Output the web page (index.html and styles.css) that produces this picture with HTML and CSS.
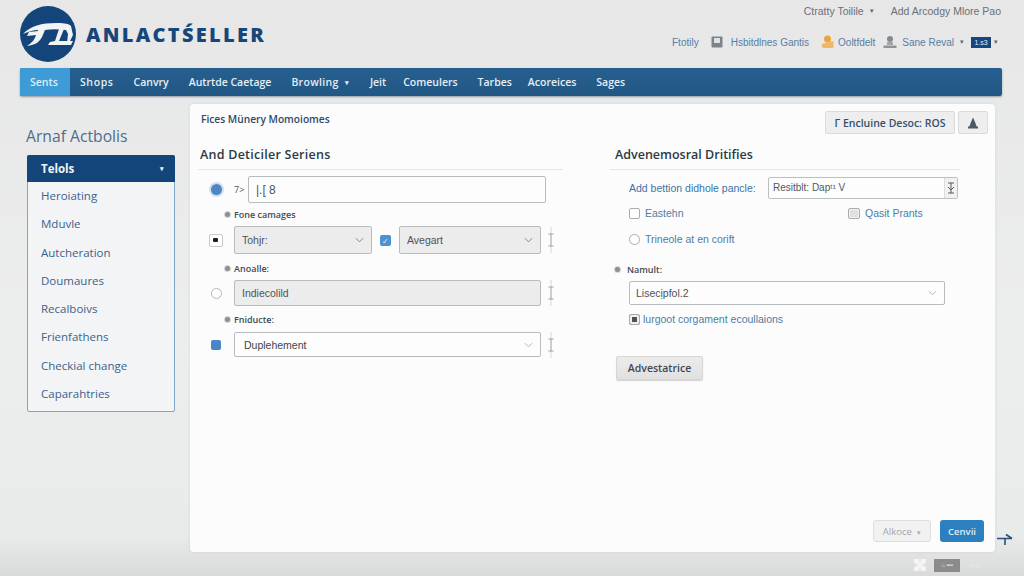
FILE: index.html
```html
<!DOCTYPE html>
<html lang="en">
<head>
<meta charset="utf-8">
<title>Anlactseller</title>
<link rel="stylesheet" href="styles.css">
</head>
<body>
<div class="page">
  <header class="header">
    <div class="brand">
      <svg class="logo" viewBox="0 0 56 56" aria-hidden="true">
        <circle cx="28" cy="28" r="28" fill="#14457a"/>
        <path d="M3 28 C10 20 22 17 36 17 C42 17 48 17 51 20 L53 29 L49 37 L47 37 L48 28 L46 24 C38 23 31 23 25 24 L22 31 C19 37 14 39 7 40 C12 37 15 33 16 29 L7 30 L9 26 L18 25 L18 24 C13 24 8 26 3 28 Z" fill="#f1f3f5"/>
        <path d="M39 23 L44 23 L39 35 L53 35 L51 39 L28 39 L30 36 L35 35 Z" fill="#f1f3f5"/>
      </svg>
      <span class="wordmark">ANLACTŚELLER</span>
    </div>
    <div class="utility">
      <div class="util-top">
        <span>Ctratty Toilile</span><span class="caret-small">▾</span>
        <span class="util-add">Add Arcodgy Mlore Pao</span>
      </div>
      <div class="util-bottom">
        <span>Ftotily</span>
        <svg class="uicon u1" viewBox="0 0 12 12"><rect x="0.5" y="0.5" width="11" height="11" rx="1" fill="#7d8388"/><rect x="3" y="2" width="6" height="5" fill="#dfe2e3"/></svg>
        <span>Hsbitdlnes Gantis</span>
        <svg class="uicon u2" viewBox="0 0 12 14"><circle cx="6" cy="4" r="3.5" fill="#eca33c"/><path d="M0 9 L12 6 L12 13 L1 13 Z" fill="#f0b765"/></svg>
        <span>Ooltfdelt</span>
        <svg class="uicon u3" viewBox="0 0 14 14"><circle cx="7" cy="4" r="3" fill="#868b8e"/><rect x="4" y="7" width="6" height="3" fill="#a2a6a8"/><rect x="0.5" y="10.5" width="13" height="2.5" fill="#8f9497"/></svg>
        <span>Sane Reval</span><span class="caret-small">▾</span>
        <span class="flag">1.s3</span><span class="caret-small caret-flag">▾</span>
      </div>
    </div>
  </header>

  <nav class="nav">
    <a class="nav-item nav-active">Sents</a>
    <a class="nav-item nav-shops">Shops</a>
    <a class="nav-item">Canvry</a>
    <a class="nav-item">Autrtde Caetage</a>
    <a class="nav-item nav-browling">Browling <span class="nav-caret">▾</span></a>
    <a class="nav-item nav-jeit">Jeit</a>
    <a class="nav-item">Comeulers</a>
    <a class="nav-item nav-tarbes">Tarbes</a>
    <a class="nav-item">Acoreices</a>
    <a class="nav-item">Sages</a>
  </nav>

  <div class="content">
    <aside class="sidebar">
      <h2 class="side-title">Arnaf Actbolis</h2>
      <div class="side-box">
        <div class="side-head"><span>Telols</span><span class="side-caret">▾</span></div>
        <ul class="side-list">
          <li>Heroiating</li>
          <li>Mduvle</li>
          <li>Autcheration</li>
          <li>Doumaures</li>
          <li>Recalboivs</li>
          <li>Frienfathens</li>
          <li>Checkial change</li>
          <li>Caparahtries</li>
        </ul>
      </div>
    </aside>

    <main class="panel">
      <div class="panel-top">
        <div class="panel-title">Fices Münery Momoiomes</div>
        <div class="panel-actions">
          <button class="btn-top">Г Encluine Desoc: ROS</button>
          <button class="btn-icon" aria-label="User">
            <svg viewBox="0 0 12 12" width="12" height="12"><path d="M6 0.5 L8 5 L10 10.5 L2 10.5 L4 5 Z" fill="#4d5a66"/><rect x="1" y="9.5" width="10" height="2" fill="#4d5a66"/></svg>
          </button>
        </div>
      </div>

      <div class="columns">
        <section class="col-left">
          <h3 class="section-head">And Deticiler Seriens</h3>

          <div class="row row-first">
            <span class="ctl"><span class="radio-on"></span></span>
            <span class="prefix">7&gt;</span>
            <div class="field field-grow field-white field-tall">|.[ 8</div>
          </div>

          <div class="sublabel sub-1"><span class="dot"></span>Fone camages</div>
          <div class="row row-selects">
            <span class="ctl"><span class="check-dot"></span></span>
            <div class="field field-gray sel-a">Tohjr:<svg class="chev" viewBox="0 0 10 6"><path d="M1 1 L5 5 L9 1" /></svg></div>
            <span class="check-blue">✓</span>
            <div class="field field-gray sel-b">Avegart<svg class="chev" viewBox="0 0 10 6"><path d="M1 1 L5 5 L9 1" /></svg></div>
            <svg class="ibeam" viewBox="0 0 8 28"><path class="ibeam-end" d="M4 1 V8 M4 20 V27" /><path d="M4 8 V20 M1.5 8 H6.5 M1.5 20 H6.5" /></svg>
          </div>

          <div class="sublabel sub-2"><span class="dot"></span>Anoalle:</div>
          <div class="row row-plain">
            <span class="ctl"><span class="radio-off"></span></span>
            <div class="field field-gray field-grow">Indiecolild</div>
            <svg class="ibeam" viewBox="0 0 8 28"><path class="ibeam-end" d="M4 1 V8 M4 20 V27" /><path d="M4 8 V20 M1.5 8 H6.5 M1.5 20 H6.5" /></svg>
          </div>

          <div class="sublabel sub-3"><span class="dot"></span>Fniducte:</div>
          <div class="row row-last">
            <span class="ctl"><span class="check-small"></span></span>
            <div class="field field-white field-grow field-dupe">Duplehement<svg class="chev chev-light" viewBox="0 0 10 6"><path d="M1 1 L5 5 L9 1" /></svg></div>
            <svg class="ibeam" viewBox="0 0 8 28"><path class="ibeam-end" d="M4 1 V8 M4 20 V27" /><path d="M4 8 V20 M1.5 8 H6.5 M1.5 20 H6.5" /></svg>
          </div>
        </section>

        <section class="col-right">
          <h3 class="section-head">Advenemosral Dritifies</h3>
          <div class="right-body">
            <div class="right-row">
              <span class="blue-label">Add bettion didhole pancle:</span>
              <div class="spin-input"><span class="spin-text">Resitblt: Dapᵗ¹ V</span><span class="spin-btn"><svg viewBox="0 0 8 12" width="8" height="12"><path d="M1 1 H7 M1 11 H7 M4 1 V11 M1 5 L4 8 L7 5" /></svg></span></div>
            </div>
            <div class="opt-row opt-row-1">
              <label class="opt opt-left"><span class="box"></span>Eastehn</label>
              <label class="opt"><span class="box box-gray"></span>Qasit Prants</label>
            </div>
            <div class="opt-row opt-row-2">
              <label class="opt"><span class="circle"></span>Trineole at en corift</label>
            </div>
            <div class="sublabel sub-right"><span class="dot"></span>Namult:</div>
            <div class="field field-white field-wide">Lisecịpfol.2<svg class="chev chev-light" viewBox="0 0 10 6"><path d="M1 1 L5 5 L9 1" /></svg></div>
            <label class="opt opt-last"><span class="box box-dark"></span>lurgoot corgament ecoullaions</label>
            <button class="btn-adv">Advestatrice</button>
          </div>
        </section>
      </div>

      <div class="panel-foot">
        <button class="btn-ghost">Alkoce <span class="caret-small">▾</span></button>
        <button class="btn-primary">Cenvii</button>
      </div>
    </main>
  </div>

  <footer class="bottom">
    <svg class="b-icon" viewBox="0 0 12 12"><path d="M0 0 H5 L6 4 L7 0 H12 V4 L8 6 L12 8 V12 H7 L6 8 L5 12 H0 V8 L4 6 L0 4 Z" fill="#f4f4f4"/></svg>
    <span class="b-chip">⌂ ▪▪▪</span>
    <span class="b-faint">▤▤</span>
  </footer>

  <svg class="side-arrow" viewBox="0 0 16 14" aria-hidden="true"><path d="M0 6.5 H15 M9 2.5 L15 6.5 M8 6.5 V13" /></svg>
</div>
</body>
</html>
```

FILE: styles.css
```css
* { box-sizing: border-box; }

html, body {
  margin: 0;
  width: 1024px;
  height: 576px;
  overflow: hidden;
}

body {
  font-family: "Open Sans", "Liberation Sans", sans-serif;
  color: #3e4a55;
}

.page {
  position: relative;
  width: 1024px;
  height: 576px;
  padding: 0 22px 0 20px;
  display: flex;
  flex-direction: column;
  background: linear-gradient(180deg, #e7e7e7 0%, #eceded 60%, #e9eaea 93%, #d9dada 100%);
}

/* Header */
.header {
  height: 68px;
  display: flex;
  justify-content: space-between;
  align-items: flex-start;
}

.brand {
  display: flex;
  align-items: center;
  gap: 10px;
  padding-top: 6px;
}

.logo { width: 56px; height: 56px; flex: none; }

.wordmark {
  font-family: "Open Sans", "Liberation Sans", sans-serif;
  font-weight: 800;
  font-size: 20px;
  letter-spacing: 2.3px;
  color: #17477a;
}

.utility {
  display: flex;
  flex-direction: column;
  align-items: flex-end;
  font-family: "Liberation Sans", sans-serif;
  font-size: 10px;
}

.util-top {
  height: 22px;
  padding-right: 1px;
  display: flex;
  align-items: center;
  font-size: 10.5px;
  color: #6a7177;
}

.util-add { margin-left: 17px; }

.util-bottom {
  margin-top: 9px;
  height: 22px;
  padding-right: 4px;
  display: flex;
  align-items: center;
  color: #5580a6;
}

.caret-small { font-size: 7px; margin-left: 6px; color: #666; }
.caret-flag { margin-left: 3px; }

.uicon { flex: none; }
.u1 { width: 12px; height: 12px; margin: 0 8px 0 12px; }
.u2 { width: 13px; height: 14px; margin: 0 4px 0 12px; }
.u3 { width: 14px; height: 14px; margin: 0 5px 0 8px; }

.flag {
  margin-left: 7px;
  width: 20px;
  height: 11px;
  background: #17457d;
  color: #e8edf3;
  font-size: 7px;
  text-align: center;
  line-height: 11px;
}

/* Navigation */
.nav {
  height: 28px;
  display: flex;
  align-items: stretch;
  background: linear-gradient(180deg, #265f8f, #225784);
  border-radius: 2px;
  box-shadow: 0 1px 2px rgba(40, 60, 80, 0.45);
}

.nav-item {
  display: flex;
  align-items: center;
  gap: 6px;
  padding: 0 10px;
  font-size: 10.5px;
  font-weight: 600;
  color: #e6edf3;
  white-space: nowrap;
}

.nav-active {
  width: 50px;
  background: #3f9bd6;
  color: #d9eefa;
  border-radius: 2px 0 0 2px;
}

.nav-shops { letter-spacing: 0.6px; }
.nav-browling { padding-right: 11px; letter-spacing: 0.3px; }
.nav-jeit { padding-right: 7px; }
.nav-tarbes { padding-right: 6px; }
.nav-caret { font-size: 7px; }

/* Content */
.content {
  flex: 1;
  display: flex;
  min-height: 0;
}

.sidebar {
  width: 170px;
  flex: none;
  padding: 30px 0 0 6px;
}

.side-title {
  margin: 0 0 9px;
  height: 20px;
  font-size: 15.7px;
  line-height: 20px;
  font-weight: 400;
  color: #4f6d8c;
}

.side-box {
  width: 148px;
  margin-left: 1px;
  height: 257px;
  background: #f2f4f6;
  border: 1px solid #7fa5c8;
  border-radius: 2px;
}

.side-head {
  height: 27px;
  margin: -1px -1px 0;
  padding: 0 11px 0 14px;
  display: flex;
  align-items: center;
  justify-content: space-between;
  background: #14457a;
  color: #f0f3f6;
  font-weight: 700;
  font-size: 11.5px;
  border-radius: 2px 2px 0 0;
}

.side-caret { font-size: 7px; }

.side-list {
  margin: 0;
  padding: 0;
  list-style: none;
}

.side-list li {
  height: 28.3px;
  line-height: 28.3px;
  padding-left: 13px;
  font-size: 11.5px;
  color: #40618a;
  white-space: nowrap;
}

/* Panel */
.panel {
  width: 805px;
  height: 448px;
  margin-top: 8px;
  display: flex;
  flex-direction: column;
  background: #fcfcfc;
  border-radius: 4px;
  box-shadow: 0 0 3px rgba(110, 120, 130, 0.18);
  padding: 7px 7px 10px 8px;
}

.panel-top {
  height: 23px;
  display: flex;
  justify-content: space-between;
  align-items: center;
}

.panel-title {
  padding: 0 0 7px 3px;
  font-size: 10.2px;
  font-weight: 600;
  color: #2f4a68;
}

.panel-actions { display: flex; gap: 3px; }

.btn-top, .btn-icon {
  height: 23px;
  border: 1px solid #d9dbdc;
  background: #eeeeee;
  border-radius: 2px;
  font-family: inherit;
  padding: 0;
  display: flex;
  align-items: center;
  justify-content: center;
}

.btn-top {
  width: 130px;
  font-size: 10.5px;
  font-weight: 600;
  color: #36506d;
}

.btn-icon { width: 30px; }

.columns {
  display: flex;
  gap: 47px;
  padding-top: 11px;
}

.col-left { width: 365px; flex: none; }
.col-right { width: 350px; flex: none; }

.section-head {
  margin: 0;
  height: 25px;
  padding: 0 0 0 2px;
  line-height: 20px;
  font-size: 12.5px;
  font-weight: 600;
  color: #2c3a47;
  border-bottom: 1px solid #e4e6e7;
}

.col-left .section-head { letter-spacing: 0.25px; }
.col-right .section-head { padding-left: 5px; }

.row {
  display: flex;
  align-items: center;
}

.row-first { margin-top: 6px; height: 27px; }
.row-selects { height: 28px; }
.row-plain { height: 26px; }
.row-last { height: 25px; }

.ctl {
  width: 36px;
  flex: none;
  display: flex;
  justify-content: center;
}

.prefix {
  width: 14px;
  font-size: 9px;
  color: #555;
  flex: none;
}

.field {
  position: relative;
  height: 100%;
  display: flex;
  align-items: center;
  font-size: 10.5px;
  font-family: "Liberation Sans", sans-serif;
  border: 1px solid #b9bcbd;
  border-radius: 2px;
  color: #4d5358;
  padding-left: 7px;
}

.field-white { background: #fdfdfd; }
.field-gray { background: #ececec; }
.field-grow { width: 307px; flex: none; }
.field-tall { width: 298px; height: 27px; font-size: 12px; }
.field-dupe { padding-left: 9px; color: #3e4448; }

.sel-a { width: 138px; flex: none; }
.sel-b { width: 142px; flex: none; height: 28px; margin-top: -1px; }

.chev {
  position: absolute;
  right: 7px;
  top: 50%;
  width: 9px;
  height: 6px;
  margin-top: -3px;
  fill: none;
  stroke: #71808c;
  stroke-width: 1;
}

.chev-light { stroke: #a2adb5; }

.ibeam {
  width: 8px;
  height: 28px;
  margin-left: 6px;
  flex: none;
  fill: none;
  stroke: #9a9ea1;
  stroke-width: 1;
}

.ibeam-end { stroke: #d5d7d8; }

.sublabel {
  display: flex;
  align-items: center;
  gap: 4px;
  padding-left: 27px;
  font-size: 9px;
  font-weight: 600;
  color: #424b53;
}

.sub-1 { height: 23px; }
.sub-2 { height: 26px; padding-top: 3px; }
.sub-3 { height: 26px; padding-top: 1px; }

.dot {
  width: 5px;
  height: 5px;
  border-radius: 50%;
  background: #8a9096;
  box-shadow: 0 0 0 1px #d4d6d8;
}

.radio-on {
  display: block;
  width: 11px;
  height: 11px;
  border-radius: 50%;
  background: #4f86c2;
  box-shadow: 0 0 0 2px #cfe0ef;
}

.check-dot {
  display: flex;
  align-items: center;
  justify-content: center;
  width: 14px;
  height: 13px;
  margin-left: -1px;
  background: #fff;
  border: 1px solid #c6c8ca;
  border-radius: 2px;
}

.check-dot::before {
  content: "";
  width: 5px;
  height: 4px;
  border-radius: 1px;
  background: #1b1e22;
}

.check-blue {
  width: 11px;
  height: 11px;
  flex: none;
  margin: 0 8px;
  background: #4a92d0;
  border-radius: 2px;
  color: #e8f2fa;
  font-size: 8px;
  line-height: 11px;
  text-align: center;
}

.radio-off {
  display: block;
  width: 11px;
  height: 11px;
  border: 1px solid #b4b7b9;
  border-radius: 50%;
  background: #fff;
}

.check-small {
  display: block;
  width: 10px;
  height: 10px;
  background: #4a86c5;
  border-radius: 2px;
}

/* Right column */
.right-body { padding-left: 19px; }

.right-row {
  margin-top: 7px;
  height: 22px;
  display: flex;
  align-items: center;
  width: 329px;
}

.blue-label {
  width: 139px;
  flex: none;
  font-family: "Liberation Sans", sans-serif;
  font-size: 10.5px;
  color: #3a74a4;
  white-space: nowrap;
}

.spin-input {
  width: 190px;
  height: 22px;
  flex: none;
  display: flex;
  border: 1px solid #bcbfc1;
  border-radius: 2px;
  background: #fdfdfd;
  font-family: "Liberation Sans", sans-serif;
  font-size: 10px;
  color: #52585d;
}

.spin-text {
  flex: 1;
  padding-left: 4px;
  line-height: 20px;
}

.spin-btn {
  width: 13px;
  display: flex;
  align-items: center;
  justify-content: center;
  background: #f1f1f1;
  border-left: 1px solid #dddddd;
}

.spin-btn svg { fill: none; stroke: #555b60; stroke-width: 1; }

.opt-row { display: flex; }
.opt-row-1 { margin-top: 3px; height: 22px; }
.opt-row-2 { margin-top: 4px; height: 22px; }

.opt {
  display: flex;
  align-items: center;
  gap: 5px;
  font-family: "Liberation Sans", sans-serif;
  font-size: 10.5px;
  color: #4e7da5;
  white-space: nowrap;
}

.opt-left { width: 219px; }

.box {
  width: 11px;
  height: 11px;
  flex: none;
  background: #fff;
  border: 1px solid #a9acae;
  border-radius: 2px;
}

.box-gray {
  width: 12px;
  background: #e0e0e0;
  box-shadow: inset 0 0 0 1px #f2f2f2;
}

.circle {
  width: 11px;
  height: 11px;
  flex: none;
  background: #fff;
  border: 1px solid #a9acae;
  border-radius: 50%;
}

.sub-right {
  height: 16px;
  margin: 11px 0 4px -14px;
  padding-left: 0;
  gap: 7px;
}

.field-wide {
  width: 316px;
  height: 24px;
  padding-left: 6px;
}

.box-dark {
  background: #4d5257;
  box-shadow: inset 0 0 0 2px #f0f0f0;
}

.opt-last {
  margin-top: 6px;
  height: 16px;
  gap: 3px;
}

.btn-adv {
  display: block;
  margin: 29px 0 0 -13px;
  width: 87px;
  height: 24px;
  padding: 0;
  background: linear-gradient(180deg, #ececec, #e0e0e0);
  border: 1px solid #d6d6d6;
  border-radius: 2px;
  box-shadow: 0 1px 1px rgba(90, 90, 90, 0.25);
  font-family: inherit;
  font-size: 10.5px;
  font-weight: 600;
  color: #3d4852;
}

/* Panel footer */
.panel-foot {
  margin-top: auto;
  display: flex;
  justify-content: flex-end;
  gap: 9px;
  padding-right: 4px;
}

.btn-ghost, .btn-primary {
  height: 22px;
  padding: 0;
  border-radius: 3px;
  font-family: inherit;
  font-size: 9.5px;
}

.btn-ghost {
  width: 58px;
  background: #f1f1f1;
  border: 1px solid #dedede;
  color: #a2a5a7;
}

.btn-ghost .caret-small { margin-left: 3px; color: #aaa; }

.btn-primary {
  width: 44px;
  background: #2d80c0;
  border: 0;
  color: #dfeefa;
  font-weight: 600;
}

/* Bottom strip */
.bottom {
  height: 24px;
  display: flex;
  align-items: center;
  justify-content: flex-end;
  gap: 8px;
  padding: 2px 19px 0 0;
}

.b-icon { width: 12px; height: 12px; }

.b-chip {
  width: 26px;
  height: 13px;
  background: #8b8b8b;
  color: #e4e4e4;
  font-size: 6px;
  line-height: 13px;
  text-align: center;
  white-space: nowrap;
  overflow: hidden;
}

.b-faint { width: 14px; margin-left: 1px; font-size: 6px; color: #e6e6e6; }

.side-arrow {
  position: absolute;
  left: 997px;
  top: 532px;
  width: 16px;
  height: 14px;
  fill: none;
  stroke: #2b4f78;
  stroke-width: 1.6;
}
```
